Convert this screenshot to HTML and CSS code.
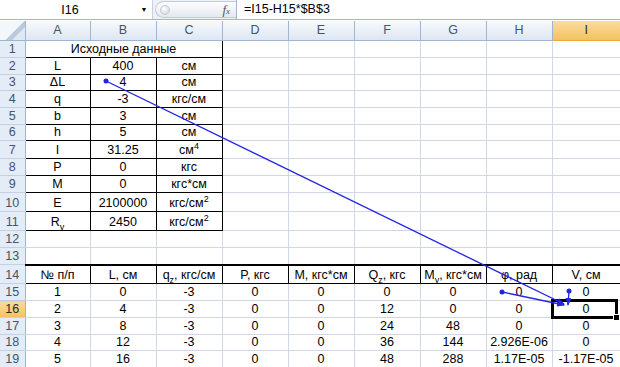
FILE: index.html
```html
<!DOCTYPE html>
<html lang="ru">
<head>
    <meta charset="UTF-8">
    <title>Лист1</title>
    <link rel="stylesheet" href="styles.css">
</head>
<body>
    <div class="formula-bar">
        <div class="name-box">
            <span class="name">I16</span>
            <span class="drop">&#9660;</span>
        </div>
        <div class="fx-area">
            <span class="grip"></span>
            <span class="fx"><i>f</i><small>x</small></span>
        </div>
        <div class="formula">=I15-H15*$B$3</div>
    </div>

    <table class="sheet">
        <colgroup>
            <col class="c-hdr">
            <col class="c-a">
            <col><col><col><col><col><col><col>
            <col class="c-i">
        </colgroup>
        <thead>
            <tr>
                <th class="corner"></th>
                <th class="col">A</th>
                <th class="col">B</th>
                <th class="col">C</th>
                <th class="col">D</th>
                <th class="col">E</th>
                <th class="col">F</th>
                <th class="col">G</th>
                <th class="col">H</th>
                <th class="col sel">I</th>
            </tr>
        </thead>
        <tbody>
            <tr class="h17">
                <th class="row">1</th>
                <td class="b" colspan="3">Исходные данные</td>
                <td></td><td></td><td></td><td></td><td></td><td></td>
            </tr>
            <tr class="h17">
                <th class="row">2</th>
                <td class="b">L</td><td class="b">400</td><td class="b">см</td>
                <td></td><td></td><td></td><td></td><td></td><td></td>
            </tr>
            <tr class="h16">
                <th class="row">3</th>
                <td class="b">ΔL</td><td class="b">4</td><td class="b">см</td>
                <td></td><td></td><td></td><td></td><td></td><td></td>
            </tr>
            <tr class="h17">
                <th class="row">4</th>
                <td class="b">q</td><td class="b">-3</td><td class="b">кгс/см</td>
                <td></td><td></td><td></td><td></td><td></td><td></td>
            </tr>
            <tr class="h17">
                <th class="row">5</th>
                <td class="b">b</td><td class="b">3</td><td class="b">см</td>
                <td></td><td></td><td></td><td></td><td></td><td></td>
            </tr>
            <tr class="h16">
                <th class="row">6</th>
                <td class="b">h</td><td class="b">5</td><td class="b">см</td>
                <td></td><td></td><td></td><td></td><td></td><td></td>
            </tr>
            <tr class="h18">
                <th class="row">7</th>
                <td class="b">I</td><td class="b">31.25</td><td class="b">см<sup>4</sup></td>
                <td></td><td></td><td></td><td></td><td></td><td></td>
            </tr>
            <tr class="h17">
                <th class="row">8</th>
                <td class="b">P</td><td class="b">0</td><td class="b">кгс</td>
                <td></td><td></td><td></td><td></td><td></td><td></td>
            </tr>
            <tr class="h17">
                <th class="row">9</th>
                <td class="b">M</td><td class="b">0</td><td class="b">кгс*см</td>
                <td></td><td></td><td></td><td></td><td></td><td></td>
            </tr>
            <tr class="h19">
                <th class="row">10</th>
                <td class="b">E</td><td class="b">2100000</td><td class="b">кгс/см<sup>2</sup></td>
                <td></td><td></td><td></td><td></td><td></td><td></td>
            </tr>
            <tr class="h19">
                <th class="row">11</th>
                <td class="b">R<sub>y</sub></td><td class="b">2450</td><td class="b">кгс/см<sup>2</sup></td>
                <td></td><td></td><td></td><td></td><td></td><td></td>
            </tr>
            <tr class="h17">
                <th class="row">12</th>
                <td></td><td></td><td></td><td></td><td></td><td></td><td></td><td></td><td></td>
            </tr>
            <tr class="h17">
                <th class="row">13</th>
                <td></td><td></td><td></td><td></td><td></td><td></td><td></td><td></td><td></td>
            </tr>
            <tr class="h19 head">
                <th class="row">14</th>
                <td>№ п/п</td>
                <td>L, см</td>
                <td>q<sub>z</sub>, кгс/см</td>
                <td>P, кгс</td>
                <td>M, кгс*см</td>
                <td>Q<sub>z</sub>, кгс</td>
                <td>M<sub>y</sub>, кгс*см</td>
                <td>φ, рад</td>
                <td>V, см</td>
            </tr>
            <tr class="h17">
                <th class="row">15</th>
                <td>1</td><td>0</td><td>-3</td><td>0</td><td>0</td><td>0</td><td>0</td><td>0</td><td>0</td>
            </tr>
            <tr class="h17">
                <th class="row sel">16</th>
                <td>2</td><td>4</td><td>-3</td><td>0</td><td>0</td><td>12</td><td>0</td><td>0</td><td class="active">0</td>
            </tr>
            <tr class="h17">
                <th class="row">17</th>
                <td>3</td><td>8</td><td>-3</td><td>0</td><td>0</td><td>24</td><td>48</td><td>0</td><td>0</td>
            </tr>
            <tr class="h16">
                <th class="row">18</th>
                <td>4</td><td>12</td><td>-3</td><td>0</td><td>0</td><td>36</td><td>144</td><td>2.926E-06</td><td>0</td>
            </tr>
            <tr class="h17">
                <th class="row">19</th>
                <td>5</td><td>16</td><td>-3</td><td>0</td><td>0</td><td>48</td><td>288</td><td>1.17E-05</td><td>-1.17E-05</td>
            </tr>
        </tbody>
    </table>

    <!-- trace precedents arrows -->
    <svg class="arrows" width="620" height="367" viewBox="0 0 620 367">
        <defs>
            <marker id="head" markerWidth="8" markerHeight="6" refX="7" refY="3" orient="auto" markerUnits="userSpaceOnUse">
                <path d="M0,0 L8,3 L0,6 z" fill="#2323e8"/>
            </marker>
        </defs>
        <line x1="106" y1="81" x2="564" y2="304" marker-end="url(#head)"/>
        <line x1="502" y1="292" x2="564" y2="305" marker-end="url(#head)"/>
        <line x1="569" y1="291" x2="568" y2="305" marker-end="url(#head)"/>
        <circle cx="106" cy="81" r="2.5"/>
        <circle cx="502" cy="292" r="2.5"/>
        <circle cx="569" cy="291" r="2.5"/>
    </svg>
</body>
</html>
```

FILE: styles.css
```css
body {
    margin: 0;
    width: 620px;
    height: 367px;
    overflow: hidden;
    position: relative;
    font-family: "Liberation Sans", Arial, sans-serif;
    font-size: 12.5px;
    color: #000;
    background: #fff;
}

/* formula bar */
.formula-bar {
    display: flex;
    height: 20px;
    box-sizing: border-box;
    border-bottom: 1px solid #a5b6cc;
    background: #eef2f7;
    margin-bottom: 1px;
}
.name-box {
    width: 153px;
    display: flex;
    align-items: center;
    background: #fff;
    border-right: 1px solid #c6d1df;
    box-sizing: border-box;
}
.name-box .name {
    flex: 1;
    text-align: center;
    padding-left: 2px;
}
.name-box .drop {
    width: 12px;
    margin-right: 2px;
    font-size: 7px;
    text-align: center;
}
.fx-area {
    width: 80px;
    margin: 1px 0 1px 2px;
    display: flex;
    align-items: center;
    justify-content: space-between;
    border: 1px solid #c2cbd8;
    border-right: none;
    border-radius: 9px 0 0 9px;
    background: linear-gradient(#fdfdfe, #e4e9f0);
}
.grip {
    width: 8px;
    height: 8px;
    margin-left: 4px;
    border-radius: 50%;
    background: radial-gradient(circle at 40% 35%, #ffffff, #c9d1dc);
    border: 1px solid #c5ccd6;
}
.fx {
    margin-right: 6px;
    font-family: "Liberation Serif", serif;
    font-size: 13px;
    color: #555;
}
.fx small {
    font-size: 9px;
    font-style: italic;
}
.formula {
    flex: 1;
    background: #fff;
    border-left: 1px solid #a5b6cc;
    padding-left: 7px;
    line-height: 19px;
}

/* sheet grid */
.sheet {
    border-collapse: collapse;
    table-layout: fixed;
    width: 620px;
}
.sheet col { width: 66px; }
.sheet col.c-hdr { width: 25px; }
.sheet col.c-a { width: 65px; }
.sheet col.c-i { width: 68px; }

.sheet td {
    border: 1px solid #d0d7e5;
    padding: 0 1px 1px;
    text-align: center;
    vertical-align: bottom;
    line-height: 14px;
    white-space: nowrap;
    overflow: hidden;
}
.sheet td.b {
    border-color: #000;
}
.sheet .head td {
    border-color: #000;
    border-top: 2px solid #000;
}

.sheet th {
    font-weight: normal;
    padding: 0;
    color: #44546a;
}
.sheet th.col {
    height: 19px;
    background: linear-gradient(#f7f9fc, #dde6f2);
    border: 1px solid #9eb6ce;
    border-top: none;
    line-height: 17px;
}
.sheet th.corner {
    background: linear-gradient(135deg, #f3f6fa 55%, #b9cadd 56%, #b9cadd 70%, #e1e8f1 71%);
    border-right: 1px solid #9eb6ce;
    border-bottom: 1px solid #9eb6ce;
}
.sheet th.row {
    background: #e4ecf7;
    border: 1px solid #9eb6ce;
    border-left: none;
    border-top-color: #c2d1e3;
    border-bottom-color: #c2d1e3;
    text-align: center;
    vertical-align: bottom;
    line-height: 14px;
    padding-bottom: 1px;
}
.sheet th.sel {
    background: linear-gradient(#f9dc9f, #f2c25e);
    color: #2b2b2b;
}
.sheet th.col.sel {
    border-color: #f2a93c;
    border-right: none;
}

.h16 { height: 16px; }
.h17 { height: 17px; }
.h18 { height: 18px; }
.h19 { height: 19px; }

sup, sub {
    font-size: 9px;
    line-height: 0;
}

.sheet td.active {
    position: relative;
    overflow: visible;
}
.sheet td.active::before {
    content: "";
    position: absolute;
    left: -2px;
    top: -2px;
    right: 2px;
    bottom: -2px;
    border: 3px solid #000;
}
.sheet td.active::after {
    content: "";
    position: absolute;
    right: 0;
    bottom: -4px;
    width: 5px;
    height: 5px;
    background: #000;
    border: 1px solid #fff;
}

.arrows {
    position: absolute;
    left: 0;
    top: 0;
    pointer-events: none;
}
.arrows line {
    stroke: #2323e8;
    stroke-width: 1.3;
}
.arrows circle {
    fill: #2323e8;
}
```
